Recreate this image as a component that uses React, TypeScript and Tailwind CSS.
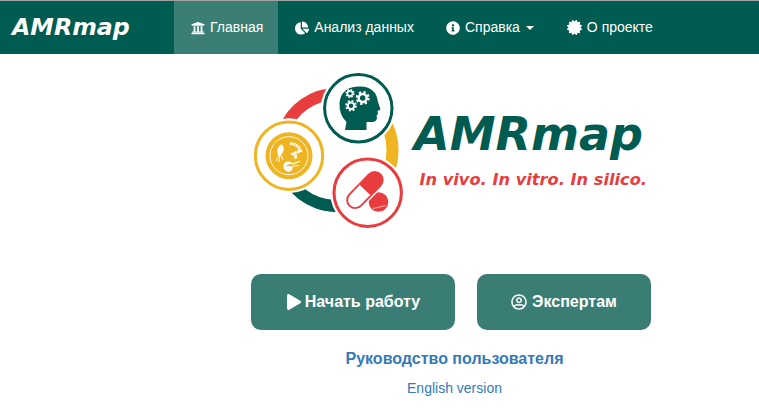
import { FaUniversity, FaChartPie, FaInfoCircle, FaCertificate, FaPlay, FaRegUserCircle } from "react-icons/fa";

const GREEN = "#005b50";
const RED = "#e83c3e";
const YELLOW = "#eeb422";

function arc(a0: number, a1: number) {
  const cx = 336.5, cy = 150, r = 56;
  const p = (a: number) => [cx + r * Math.cos((a * Math.PI) / 180), cy + r * Math.sin((a * Math.PI) / 180)];
  const [x0, y0] = p(a0);
  const [x1, y1] = p(a1);
  return `M${x0} ${y0} A${r} ${r} 0 0 1 ${x1} ${y1}`;
}

function Gear({ x, y, r }: { x: number; y: number; r: number }) {
  const c = 2 * Math.PI * r;
  return (
    <g fill="none" stroke="#fff">
      <circle cx={x} cy={y} r={r * 0.68} strokeWidth={r * 0.42} />
      <circle cx={x} cy={y} r={r} strokeWidth={r * 0.42} strokeDasharray={`${c / 16} ${c / 16}`} />
    </g>
  );
}

function Logo() {
  return (
    <svg width="400" height="160" viewBox="250 70 400 160" className="block">
      <path d={arc(200, 270)} fill="none" stroke={RED} strokeWidth="12" />
      <path d={arc(-40, 40)} fill="none" stroke={YELLOW} strokeWidth="12" />
      <path d={arc(75, 145)} fill="none" stroke={GREEN} strokeWidth="12" />

      {/* brain */}
      <circle cx="358.3" cy="108.3" r="37.5" fill="#fff" />
      <circle cx="358.3" cy="108.3" r="33.7" fill="#fff" stroke={GREEN} strokeWidth="3" />
      <path
        d="M345 130 L346.5 122 Q339 115 339.5 103 Q341 86.5 360 86.5 Q376 86.5 378 102 L380.5 109.5 L377.5 111 L378 114 L376.5 115.5 L377 118 Q376.5 122 372 122 L366.5 122 L366.5 130 Z"
        fill={GREEN}
      />
      <Gear x={350} y={93.5} r={3.8} />
      <Gear x={362.7} y={98} r={5.8} />
      <Gear x={351} y={105.7} r={4.8} />

      {/* microbes */}
      <circle cx="289" cy="155.7" r="37.5" fill="#fff" />
      <circle cx="289" cy="155.7" r="33.7" fill="#fff" stroke={YELLOW} strokeWidth="3" />
      <circle cx="289" cy="155.7" r="23.5" fill={YELLOW} />
      <circle cx="289" cy="155.7" r="19" fill="none" stroke="#fff" strokeWidth="0.9" />
      <ellipse cx="280.5" cy="150" rx="3" ry="5.5" fill="#fff" transform="rotate(15 280.5 150)" />
      <path d="M279 155 L276 161 M280 155 L279 162 M281 155 L283 160" stroke="#fff" strokeWidth="1" fill="none" />
      <path
        d="M290 143.5 L295 144.5 L298.5 147 L300.5 151 L296 152.5 L293 154 L297 156 L294 158.5"
        stroke="#fff"
        strokeWidth="2.8"
        strokeDasharray="2.4 0.6"
        fill="none"
      />
      <path
        d="M284 166 Q284 162 288.5 162 Q291 162 292.5 164 L297 162.5 L300 161 M293 166 L299 165.5 M292.5 167 Q291 172 287.5 171 Q284 170 284 166 Z"
        fill="#fff"
        stroke="#fff"
        strokeWidth="1.1"
      />

      {/* pill */}
      <circle cx="367.7" cy="192.7" r="37.5" fill="#fff" />
      <circle cx="367.7" cy="192.7" r="33.7" fill="#fff" stroke={RED} strokeWidth="3" />
      <circle cx="378.5" cy="202" r="9.8" fill={RED} />
      <path d="M373 208.5 L386 205.5" stroke="#fff" strokeWidth="0.6" />
      <g transform="rotate(-46 365 190)">
        <rect x="341" y="179.5" width="48" height="21" rx="10.5" fill="#fff" />
        <path d="M365 181 H379 A9 9 0 0 1 379 199 H365 Z" fill={RED} />
        <path d="M365 181.9 H351 A8.1 8.1 0 0 0 351 198.1 H365" fill="none" stroke={RED} strokeWidth="1.9" />
      </g>

      <text
        x="414"
        y="150"
        fill={GREEN}
        fontFamily="'DejaVu Sans', sans-serif"
        fontWeight="700"
        fontStyle="italic"
        fontSize="46"
        textLength="229"
        lengthAdjust="spacingAndGlyphs"
      >
        AMRmap
      </text>
      <text
        x="419.5"
        y="185"
        fill={RED}
        fontFamily="'DejaVu Sans', sans-serif"
        fontWeight="700"
        fontStyle="italic"
        fontSize="15.5"
        textLength="227.5"
        lengthAdjust="spacingAndGlyphs"
      >
        In vivo. In vitro. In silico.
      </text>
    </svg>
  );
}

function NavItem({ icon, label, active, caret }: { icon: React.ReactNode; label: string; active?: boolean; caret?: boolean }) {
  return (
    <a className={`flex items-center gap-[5px] pl-[17px] pr-[15px] text-[14px] text-white ${active ? "bg-[#3a7e75]" : ""}`}>
      {icon}
      <span>{label}</span>
      {caret && <span className="ml-px mr-px h-0 w-0 border-x-4 border-t-4 border-x-transparent border-t-white" />}
    </a>
  );
}

export default function App() {
  return (
    <div className="h-[410px] w-[759px] overflow-hidden bg-white font-['Liberation_Sans',sans-serif]">
      <div className="h-px bg-[#a3a3a3]" />
      <nav className="flex h-[53px] bg-[#005b50]">
        <a className="flex w-[174px] items-center pl-3 font-['DejaVu_Sans',sans-serif] text-[23.7px] font-bold italic text-white">AMRmap</a>
        <NavItem active icon={<FaUniversity size={14} />} label="Главная" />
        <NavItem icon={<FaChartPie size={14} />} label="Анализ данных" />
        <NavItem icon={<FaInfoCircle size={14} />} label="Справка" caret />
        <NavItem icon={<FaCertificate size={15} />} label="О проекте" />
      </nav>
      <main className="ml-[250px] w-[402px] pt-4">
        <Logo />
        <div className="ml-px mt-[44px] flex gap-[22px]">
          <a className="flex h-14 w-[204px] items-center justify-center gap-[3px] rounded-[10px] bg-[#397d75] text-base font-bold text-white">
            <FaPlay size={16} />
            Начать работу
          </a>
          <a className="flex h-14 w-[174px] items-center justify-center gap-[5px] rounded-[10px] bg-[#397d75] text-base font-bold text-white">
            <FaRegUserCircle size={16} />
            Экспертам
          </a>
        </div>
        <div className="mt-5 pl-[7px] text-center text-base font-bold leading-[18px] text-[#337ab7]">Руководство пользователя</div>
        <div className="mt-3 pl-[7px] text-center text-[14px] leading-4 text-[#337ab7]">English version</div>
      </main>
    </div>
  );
}
